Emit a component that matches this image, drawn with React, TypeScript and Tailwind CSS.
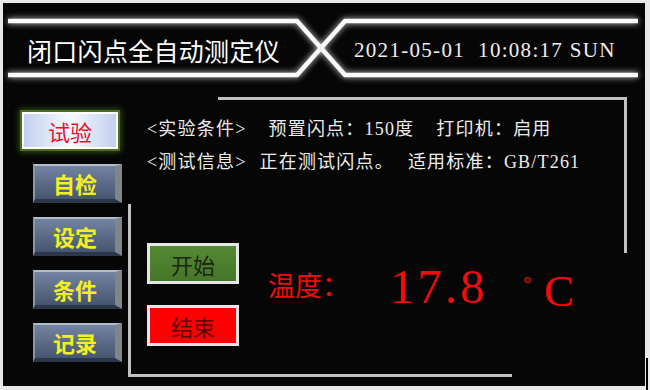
import type { ReactNode } from 'react';

const cjk = "font-['Noto_Sans_CJK_SC',sans-serif]";
const serif = "font-['Liberation_Serif','Noto_Sans_CJK_SC',serif]";

const navItems = ['自检', '设定', '条件', '记录'];

function NavButton({ label }: { label: string }) {
  return (
    <div className="ml-[30px] w-[89px] h-[39px] flex items-center justify-center border-t-2 border-l-2 border-r-[7px] border-b-[4px] border-t-[#b4bcc8] border-l-[#8c97aa] border-r-[#80848b] border-b-[#2c3649] bg-linear-to-b from-[#7384a3] to-[#46556f]">
      <span className={`${cjk} text-[22px] leading-none font-bold text-[#f2ef24]`}>{label}</span>
    </div>
  );
}

function ActionButton({ children, className }: { children: ReactNode; className: string }) {
  return (
    <div className={`w-[92px] h-[41px] flex items-center justify-center border-[3px] border-[#e6e6e6] ${className}`}>
      <span className={`${cjk} text-[22px] leading-none`}>{children}</span>
    </div>
  );
}

export default function App() {
  return (
    <div className="relative w-[650px] h-[390px] bg-[#e9e9e9] pt-[3px] pl-[3px] overflow-hidden">
      <div className="w-[642px] h-[383px] bg-[#060606] flex flex-col">
        {/* header */}
        <header className="relative h-[94px] flex items-center shrink-0">
          <svg
            className="absolute inset-0 drop-shadow-[0_0_3px_rgba(255,255,255,0.85)]"
            width="642"
            height="94"
            viewBox="0 0 642 94"
            fill="none"
          >
            <polyline points="5,18 294,18 342,72 635,72" stroke="#fafafa" strokeWidth="4.5" strokeLinejoin="miter" />
            <polyline points="5,72 294,72 342,18 635,18" stroke="#fafafa" strokeWidth="4.5" strokeLinejoin="miter" />
          </svg>
          <div className="relative w-[351px] pl-[24px]">
            <h1 className={`${cjk} text-[25px] leading-none tracking-[0.3px] text-white`}>闭口闪点全自动测定仪</h1>
          </div>
          <div className={`relative ${serif} text-[21px] leading-none tracking-[1.3px] text-[#f3ecec] whitespace-pre`}>
            2021-05-01  10:08:17 SUN
          </div>
        </header>

        {/* body */}
        <div className="flex flex-1">
          <nav className="w-[125px] shrink-0 pt-[15px] flex flex-col">
            <div className="ml-[19px] mb-[15px] w-[96px] h-[37px] flex items-center justify-center border-2 border-white shadow-[0_0_0_2px_#4e6c22,0_0_6px_3px_#33501a] bg-linear-to-r from-[#c3d0ee] via-[#f7f9ff] to-[#c3d0ee]">
              <span className={`${cjk} text-[22px] leading-none text-[#e8112d]`}>试验</span>
            </div>
            <div className="flex flex-col gap-[14px]">
              {navItems.map((n) => (
                <NavButton key={n} label={n} />
              ))}
            </div>
          </nav>

          <div className="grid grid-cols-[90px_294px_115px_18px] grid-rows-[107px_49px_124px_9px] w-[517px]">
            <div className="col-start-2 col-end-4 row-start-1 row-end-3 border-t-[3px] border-r-[3px] border-[#c2c2c2]" />
            <div className="col-start-1 col-end-3 row-start-2 row-end-4 border-l-[3px] border-b-[3px] border-[#c2c2c2]" />

            <div className={`col-start-1 col-end-5 row-start-1 row-end-2 pl-[19px] pt-[16px] ${serif} text-[18px] tracking-[1.2px] text-[#ececec]`}>
              <div className="flex h-[33px] items-center gap-[22px] whitespace-pre">
                <span>&lt;实验条件&gt;</span>
                <span>预置闪点：150度</span>
                <span>打印机：启用</span>
              </div>
              <div className="flex h-[33px] items-center whitespace-pre">
                <span>&lt;测试信息&gt;</span>
                <span className="ml-[13px]">正在测试闪点。</span>
                <span className="ml-[14px]">适用标准：GB/T261</span>
              </div>
            </div>

            <div className="col-start-1 col-end-5 row-start-2 row-end-4 pl-[19px] pt-[39px] flex items-start">
              <div className="flex flex-col gap-[21px]">
                <ActionButton className="bg-linear-to-b from-[#548a33] to-[#467528] text-[#1b2612]">开始</ActionButton>
                <ActionButton className="bg-[#fe0000] text-[#5c0000]">结束</ActionButton>
              </div>
              <div className="ml-[29px] mt-[19px] flex items-start text-[#f40a0a]">
                <span className={`${cjk} w-[122px] mt-[9px] text-[27px] leading-none`}>温度：</span>
                <span className={`${serif} w-[133px] text-[49px] leading-none tracking-[3px]`}>17.8</span>
                <span className={`${serif} w-[21px] mt-[11px] text-[22px] leading-none`}>°</span>
                <span className={`${serif} mt-[7px] text-[45px] leading-none`}>C</span>
              </div>
            </div>
          </div>
        </div>
      </div>
      <div className="absolute right-[2px] bottom-0 w-[2px] h-[32px] bg-black" />
    </div>
  );
}
